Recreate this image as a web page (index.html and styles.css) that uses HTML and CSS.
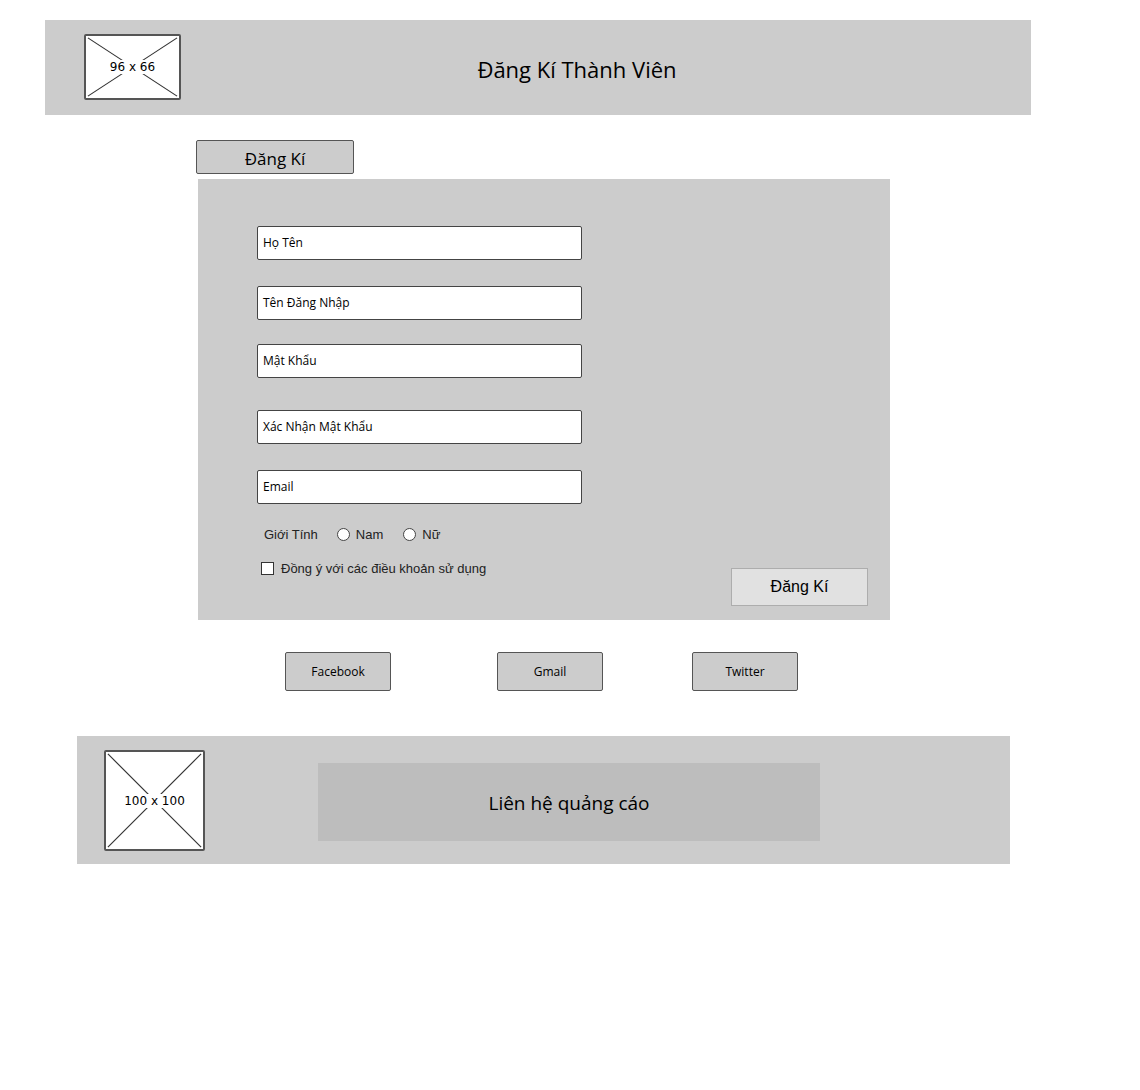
FILE: index.html
```html
<!DOCTYPE html>
<html lang="vi">

<head>
    <meta charset="UTF-8">
    <meta name="viewport" content="width=device-width, initial-scale=1.0">
    <title>Đăng Kí Thành Viên</title>
    <link rel="stylesheet" href="styles.css">
</head>

<body>
    <header class="top-bar">
        <div class="placeholder logo">
            <svg viewBox="0 0 97 66" preserveAspectRatio="none">
                <line x1="2" y1="2" x2="95" y2="64" />
                <line x1="95" y1="2" x2="2" y2="64" />
            </svg>
            <span class="placeholder-label">96 x 66</span>
        </div>
        <h1 class="page-title">Đăng Kí Thành Viên</h1>
    </header>

    <div class="tab">Đăng Kí</div>

    <form class="panel">
        <div class="field f1">Họ Tên</div>
        <div class="field f2">Tên Đăng Nhập</div>
        <div class="field f3">Mật Khẩu</div>
        <div class="field f4">Xác Nhận Mật Khẩu</div>
        <div class="field f5">Email</div>

        <div class="panel-foot">
            <div class="options">
                <div class="gender">
                    <span class="gender-label">Giới Tính</span>
                    <span class="radio"></span>
                    <span>Nam</span>
                    <span class="radio r2"></span>
                    <span>Nữ</span>
                </div>
                <div class="terms">
                    <span class="check"></span>
                    <span>Đồng ý với các điều khoản sử dụng</span>
                </div>
            </div>
            <div class="submit">Đăng Kí</div>
        </div>
    </form>

    <div class="social">
        <div class="social-btn">Facebook</div>
        <div class="social-btn gmail">Gmail</div>
        <div class="social-btn twitter">Twitter</div>
    </div>

    <footer class="bottom-bar">
        <div class="placeholder ad-img">
            <svg viewBox="0 0 101 101" preserveAspectRatio="none">
                <line x1="2" y1="2" x2="99" y2="99" />
                <line x1="99" y1="2" x2="2" y2="99" />
            </svg>
            <span class="placeholder-label">100 x 100</span>
        </div>
        <div class="ad-box">Liên hệ quảng cáo</div>
    </footer>
</body>

</html>
```

FILE: styles.css
```css
body {
    margin: 0;
    padding-top: 20px;
    background: #fff;
    color: #000;
    font-family: "Open Sans", "DejaVu Sans", sans-serif;
}

.top-bar {
    display: flex;
    align-items: flex-start;
    width: 986px;
    height: 95px;
    margin-left: 45px;
    background: #cccccc;
    box-sizing: border-box;
    padding: 14px 58px 0 39px;
}

.placeholder {
    position: relative;
    background: #fff;
    border: 2px solid #555;
    border-radius: 2px;
    box-sizing: border-box;
}

.placeholder svg {
    display: block;
    width: 100%;
    height: 100%;
}

.placeholder line {
    stroke: #333;
    stroke-width: 1.2;
}

.placeholder-label {
    position: absolute;
    left: 50%;
    top: 50%;
    transform: translate(-50%, -50%);
    background: #fff;
    padding: 0 2px;
    font-family: "DejaVu Sans", sans-serif;
    font-size: 12px;
    white-space: nowrap;
}

.logo {
    width: 97px;
    height: 66px;
}

.page-title {
    flex: 1;
    margin: 19px 0 0 0;
    text-align: center;
    font-size: 22px;
    font-weight: normal;
    line-height: 32px;
}

.tab {
    width: 158px;
    height: 34px;
    margin: 25px 0 0 196px;
    background: #cccccc;
    border: 1.5px solid #555;
    border-radius: 2px;
    box-sizing: border-box;
    text-align: center;
    font-size: 17px;
    line-height: 35px;
}

.panel {
    width: 692px;
    height: 441px;
    margin: 5px 0 0 198px;
    padding: 47px 22px 0 59px;
    background: #cccccc;
    box-sizing: border-box;
}

.field {
    width: 325px;
    height: 34px;
    background: #fff;
    border: 1.5px solid #444;
    border-radius: 2px;
    box-sizing: border-box;
    padding-left: 5px;
    font-size: 12px;
    line-height: 31px;
}

.f2 {
    margin-top: 26px;
}

.f3 {
    margin-top: 24px;
}

.f4 {
    margin-top: 32px;
}

.f5 {
    margin-top: 26px;
}

.panel-foot {
    display: flex;
    justify-content: space-between;
    align-items: flex-start;
}

.options {
    font-family: "Liberation Sans", Arial, sans-serif;
    font-size: 13px;
    color: #222;
}

.gender {
    display: flex;
    align-items: center;
    height: 16px;
    margin-top: 22px;
    padding-left: 7px;
}

.gender-label {
    margin-right: 19px;
}

.radio {
    width: 11px;
    height: 11px;
    border: 1px solid #444;
    border-radius: 50%;
    background: #fff;
    margin-right: 6px;
}

.r2 {
    margin-left: 20px;
}

.terms {
    display: flex;
    align-items: center;
    height: 16px;
    margin-top: 18px;
    padding-left: 4px;
}

.check {
    width: 11px;
    height: 11px;
    border: 1px solid #333;
    background: #fff;
    margin-right: 7px;
}

.submit {
    width: 137px;
    height: 38px;
    margin-top: 64px;
    background: #e1e1e1;
    border: 1px solid #adadad;
    box-sizing: border-box;
    text-align: center;
    font-family: "Liberation Sans", Arial, sans-serif;
    font-size: 16px;
    line-height: 36px;
}

.social {
    display: flex;
    margin: 32px 0 0 285px;
}

.social-btn {
    width: 106px;
    height: 39px;
    background: #cccccc;
    border: 1.5px solid #555;
    border-radius: 2px;
    box-sizing: border-box;
    text-align: center;
    font-size: 12px;
    line-height: 37px;
}

.gmail {
    margin-left: 106px;
}

.twitter {
    margin-left: 89px;
}

.bottom-bar {
    display: flex;
    align-items: flex-start;
    width: 933px;
    height: 128px;
    margin: 45px 0 0 77px;
    padding: 14px 0 0 27px;
    background: #cccccc;
    box-sizing: border-box;
}

.ad-img {
    width: 101px;
    height: 101px;
}

.ad-box {
    width: 502px;
    height: 78px;
    margin: 13px 0 0 113px;
    background: #bdbdbd;
    text-align: center;
    font-size: 19px;
    line-height: 80px;
}
```
